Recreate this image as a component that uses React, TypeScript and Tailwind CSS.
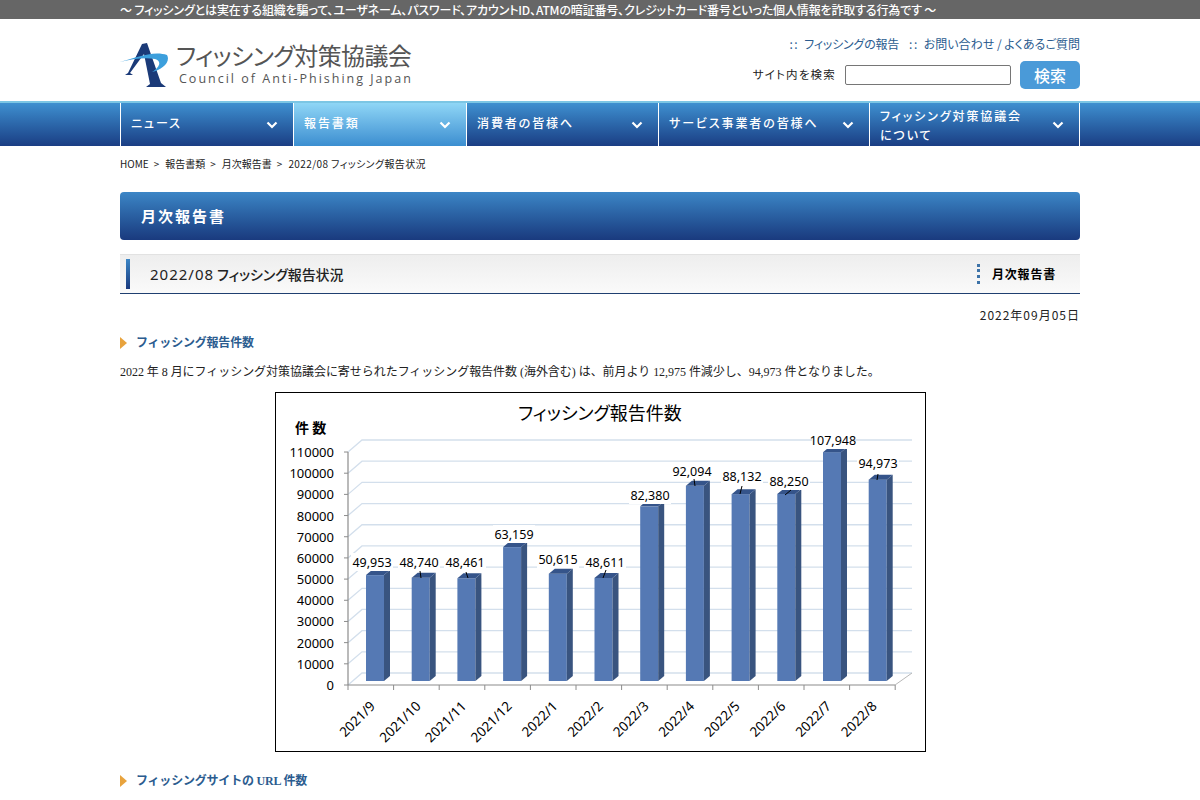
import React from "react";

const data = [
  { v: 49953, t: "49,953", c: "2021/9", lx: 372, ly: 562 },
  { v: 48740, t: "48,740", c: "2021/10", lx: 419, ly: 562, l: [420, 571, 421, 578] },
  { v: 48461, t: "48,461", c: "2021/11", lx: 465, ly: 562, l: [466, 572, 468, 578] },
  { v: 63159, t: "63,159", c: "2021/12", lx: 514, ly: 534 },
  { v: 50615, t: "50,615", c: "2022/1", lx: 558, ly: 559 },
  { v: 48611, t: "48,611", c: "2022/2", lx: 605, ly: 562, l: [606, 570, 603, 578] },
  { v: 82380, t: "82,380", c: "2022/3", lx: 650, ly: 495 },
  { v: 92094, t: "92,094", c: "2022/4", lx: 692, ly: 471, l: [694, 479, 695, 486] },
  { v: 88132, t: "88,132", c: "2022/5", lx: 742, ly: 476, l: [742, 486, 740, 494] },
  { v: 88250, t: "88,250", c: "2022/6", lx: 789, ly: 481, l: [791, 490, 785, 495] },
  { v: 107948, t: "107,948", c: "2022/7", lx: 833, ly: 440 },
  { v: 94973, t: "94,973", c: "2022/8", lx: 878, ly: 463, l: [878, 474, 877, 480] },
];

const ticks = Array.from({ length: 12 }, (_, k) => k);
const chartFont = "'Noto Sans','Noto Sans CJK JP',sans-serif";

function Chart() {
  return (
    <svg width="649" height="358" viewBox="276 393 649 358" className="block">
      <text x="600" y="420" textAnchor="middle" fontSize="18" fill="#000" fontFamily="'Noto Sans CJK JP',sans-serif" style={{ fontFeatureSettings: '"palt"' }}>
        フィッシング報告件数
      </text>
      <text x="295" y="433" fontSize="14" fontWeight="700" fill="#000" fontFamily="'Noto Sans CJK JP',sans-serif">
        件 数
      </text>
      {ticks.map((k) => {
        const y = 685 - 21.18 * k;
        return (
          <g key={k}>
            <polyline points={`348,${y} 362,${y - 12} 912,${y - 12}`} fill="none" stroke="#d3dfec" strokeWidth="1.3" />
            <line x1="344" x2="348" y1={y} y2={y} stroke="#8c8c8c" strokeWidth="1" />
            <text x="334" y={y + 5} textAnchor="end" fontSize="13" fill="#000" fontFamily={chartFont}>
              {k * 10000}
            </text>
          </g>
        );
      })}
      <polyline points="895,685 912,673" fill="none" stroke="#b8b8b8" strokeWidth="1" />
      <line x1="348" x2="348" y1="452" y2="685" stroke="#8c8c8c" strokeWidth="1.2" />
      <line x1="348" x2="895" y1="685" y2="685" stroke="#8c8c8c" strokeWidth="1.2" />
      {Array.from({ length: 13 }, (_, i) => (
        <line key={i} x1={348 + 45.6 * i} x2={348 + 45.6 * i} y1="685" y2="690" stroke="#8c8c8c" strokeWidth="1" />
      ))}
      {data.map((d, i) => {
        const x = 366 + 45.7 * i;
        const top = 681 - (d.v / 1000) * 2.12;
        return (
          <g key={d.c}>
            <rect x={x} y={top} width="18" height={681 - top} fill="#5579b4" />
            <polygon points={`${x + 18},${top} ${x + 24},${top - 5} ${x + 24},676 ${x + 18},681`} fill="#39547f" />
            <polygon points={`${x},${top} ${x + 6},${top - 5} ${x + 24},${top - 5} ${x + 18},${top}`} fill="#35548a" />
          </g>
        );
      })}
      {data.map((d) => (
        <g key={d.t}>
          <rect x={d.lx - 21} y={d.ly - 9} width="42" height="18" fill="#fff" />
          <text x={d.lx} y={d.ly + 5} textAnchor="middle" fontSize="12.5" fill="#000" fontFamily={chartFont}>
            {d.t}
          </text>
          {d.l ? <line x1={d.l[0]} y1={d.l[1]} x2={d.l[2]} y2={d.l[3]} stroke="#000" strokeWidth="1" /> : null}
        </g>
      ))}
      {data.map((d, i) => {
        const x = 376 + 45.6 * i;
        const y = 707;
        return (
          <text key={d.c} x={x} y={y} textAnchor="end" fontSize="13.5" fill="#000" fontFamily={chartFont} transform={`rotate(-45 ${x} ${y})`}>
            {d.c}
          </text>
        );
      })}
    </svg>
  );
}

function Logo() {
  return (
    <svg width="50" height="45" viewBox="0 0 50 45" className="shrink-0">
      <polygon points="22,1 27,0 41,40 46,44 26,44 30,41 24,11 10,30 13,32 5,32 8,30" fill="#1b3a78" />
      <path d="M0 19 C14 15 34 7 47 12 C51 19 42 27 32 29 C40 24 42 18 35 16 C25 14 12 16 0 19 Z" fill="#3c9fdc" />
    </svg>
  );
}

function Chevron() {
  return (
    <svg width="12" height="8" viewBox="0 0 12 8" className="shrink-0">
      <path d="M1.5 1.5 L6 6 L10.5 1.5" fill="none" stroke="#fff" strokeWidth="2.2" />
    </svg>
  );
}

const nav = [
  { w: "w-[173px]", lines: ["ニュース"] },
  { w: "w-[173px]", lines: ["報告書類"], active: true },
  { w: "w-[192px]", lines: ["消費者の皆様へ"] },
  { w: "w-[211px]", lines: ["サービス事業者の皆様へ"] },
  { w: "w-[210px]", lines: ["フィッシング対策協議会", "について"] },
];

function H3({ children }: { children: React.ReactNode }) {
  return (
    <div className="flex items-center gap-[9px] h-[18px] text-[12px] font-bold text-[#2b5c8f] [font-family:'Liberation_Serif','Noto_Sans_CJK_JP',serif] tracking-[-0.2px]">
      <span className="w-0 h-0 border-y-[6px] border-y-transparent border-l-[7px] border-l-[#e8a33d]" />
      <span>{children}</span>
    </div>
  );
}

export default function App() {
  return (
    <div className="bg-white min-h-[800px] h-[800px] overflow-hidden text-black [font-family:'Noto_Sans_CJK_JP',sans-serif]">
      <div className="h-[19px] bg-[#666666]">
        <div className="w-[960px] mx-auto h-full flex items-center text-[12px] font-medium text-white whitespace-nowrap tracking-[-0.15px] [font-feature-settings:'palt']">
          〜 フィッシングとは実在する組織を騙って、ユーザネーム、パスワード、アカウントID、ATMの暗証番号、クレジットカード番号といった個人情報を詐取する行為です 〜
        </div>
      </div>

      <div className="w-[960px] mx-auto h-[82px] flex justify-between">
        <div className="flex gap-[6px] pt-[24px]">
          <Logo />
          <div className="flex flex-col -mt-[2px]">
            <div className="text-[24px] leading-[28px] text-[#555555] whitespace-nowrap tracking-[-0.65px] [font-feature-settings:'palt']">フィッシング対策協議会</div>
            <div className="text-[12.5px] leading-[16px] mt-[2px] ml-[3px] text-[#555555] tracking-[2px] whitespace-nowrap [font-family:'Open_Sans',sans-serif]">Council of Anti-Phishing Japan</div>
          </div>
        </div>
        <div className="flex flex-col items-end pt-[18px]">
          <div className="flex gap-[10px] text-[12px] leading-[14px] text-[#2b5c8f] whitespace-nowrap [font-feature-settings:'palt']">
            <span className="tracking-[-0.2px]"><span className="tracking-[1.5px] mr-[5px]">::</span>フィッシングの報告</span>
            <span><span className="tracking-[1.5px] mr-[5px]">::</span>お問い合わせ / よくあるご質問</span>
          </div>
          <div className="flex items-center mt-[10px]">
            <span className="text-[11.5px] text-[#222222] tracking-[1.2px] mr-[9px] [font-feature-settings:'palt']">サイト内を検索</span>
            <div className="w-[166px] h-[20px] border border-[#767676] rounded-[2px] bg-white mr-[9px]" />
            <div className="w-[60px] h-[28px] rounded-[5px] bg-[#4a9ad8] text-white text-[16px] font-medium flex items-center justify-center">検索</div>
          </div>
        </div>
      </div>

      <div className="h-[45px] border-t-2 border-t-[#7cc6e4] bg-gradient-to-b from-[#3f90d0] to-[#1b3e84]">
        <div className="w-[960px] mx-auto h-full flex border-l border-l-white">
          {nav.map((n, i) => (
            <div
              key={i}
              className={`${n.w} ${n.active ? "bg-gradient-to-b from-[#8fd6f6] to-[#3b8ed0]" : ""} border-r border-r-white h-full box-border pl-[10px] pr-[15px] flex items-center justify-between text-[12px] leading-[19px] font-medium text-white tracking-[1.9px] [font-feature-settings:'palt']`}
            >
              <div className={`${n.lines.length > 1 ? "mt-[1px]" : "-mt-[5px]"} whitespace-nowrap`}>
                {n.lines.map((l) => (
                  <div key={l}>{l}</div>
                ))}
              </div>
              <Chevron />
            </div>
          ))}
        </div>
      </div>

      <div className="w-[960px] mx-auto">
        <div className="h-[34px] flex items-center text-[10px] text-[#222222] gap-[5px] whitespace-nowrap mb-[12px] [font-feature-settings:'palt']">
          <span>HOME</span><span>&gt;</span><span className="ml-[1px]">報告書類</span><span>&gt;</span><span className="ml-[1px]">月次報告書</span><span>&gt;</span><span className="ml-[1px] tracking-[0.4px]">2022/08 フィッシング報告状況</span>
        </div>

        <div className="h-[48px] rounded-[4px] bg-gradient-to-b from-[#3c86c6] to-[#1a3a7e] flex items-center pl-[21px] text-[15px] font-bold text-white tracking-[2px]">
          月次報告書
        </div>

        <div className="mt-[14px] h-[40px] box-border border-t border-t-[#e2e2e2] border-b border-b-[#1f3f70] bg-gradient-to-b from-[#eeeeee] to-[#fafafa] flex items-center pl-[6px] pr-[24px]">
          <div className="w-[4px] h-[30px] bg-gradient-to-b from-[#3c86c6] to-[#1a3a7e]" />
          <div className="ml-[20px] flex items-center gap-[3px] text-[14px] font-medium text-[#222222] whitespace-nowrap [font-feature-settings:'palt']">
            <span className="[font-family:'Noto_Sans',sans-serif] font-normal text-[15px] tracking-[1px]">2022/08</span>
            <span className="tracking-[-0.1px]">フィッシング報告状況</span>
          </div>
          <div className="ml-auto h-[20px] border-l-[3px] border-dotted border-l-[#3d73a8]" />
          <div className="ml-[12px] text-[12px] font-bold tracking-[0.8px]">月次報告書</div>
        </div>

        <div className="mt-[13px] h-[16px] flex items-center justify-end text-[12px] text-[#222222] tracking-[1px]">2022年09月05日</div>

        <div className="mt-[11px]"><H3>フィッシング報告件数</H3></div>

        <p className="mt-[11px] h-[18px] text-[12px] leading-[18px] text-[#222222] whitespace-nowrap tracking-[-0.04px] [font-family:'Liberation_Serif','Noto_Sans_CJK_JP',serif]">
          2022 年 8 月にフィッシング対策協議会に寄せられたフィッシング報告件数 (海外含む) は、前月より 12,975 件減少し、94,973 件となりました。
        </p>

        <div className="mt-[11px] ml-[155px] w-[651px] border border-black">
          <Chart />
        </div>

        <div className="mt-[20px]"><H3>フィッシングサイトの URL 件数</H3></div>
      </div>
    </div>
  );
}
